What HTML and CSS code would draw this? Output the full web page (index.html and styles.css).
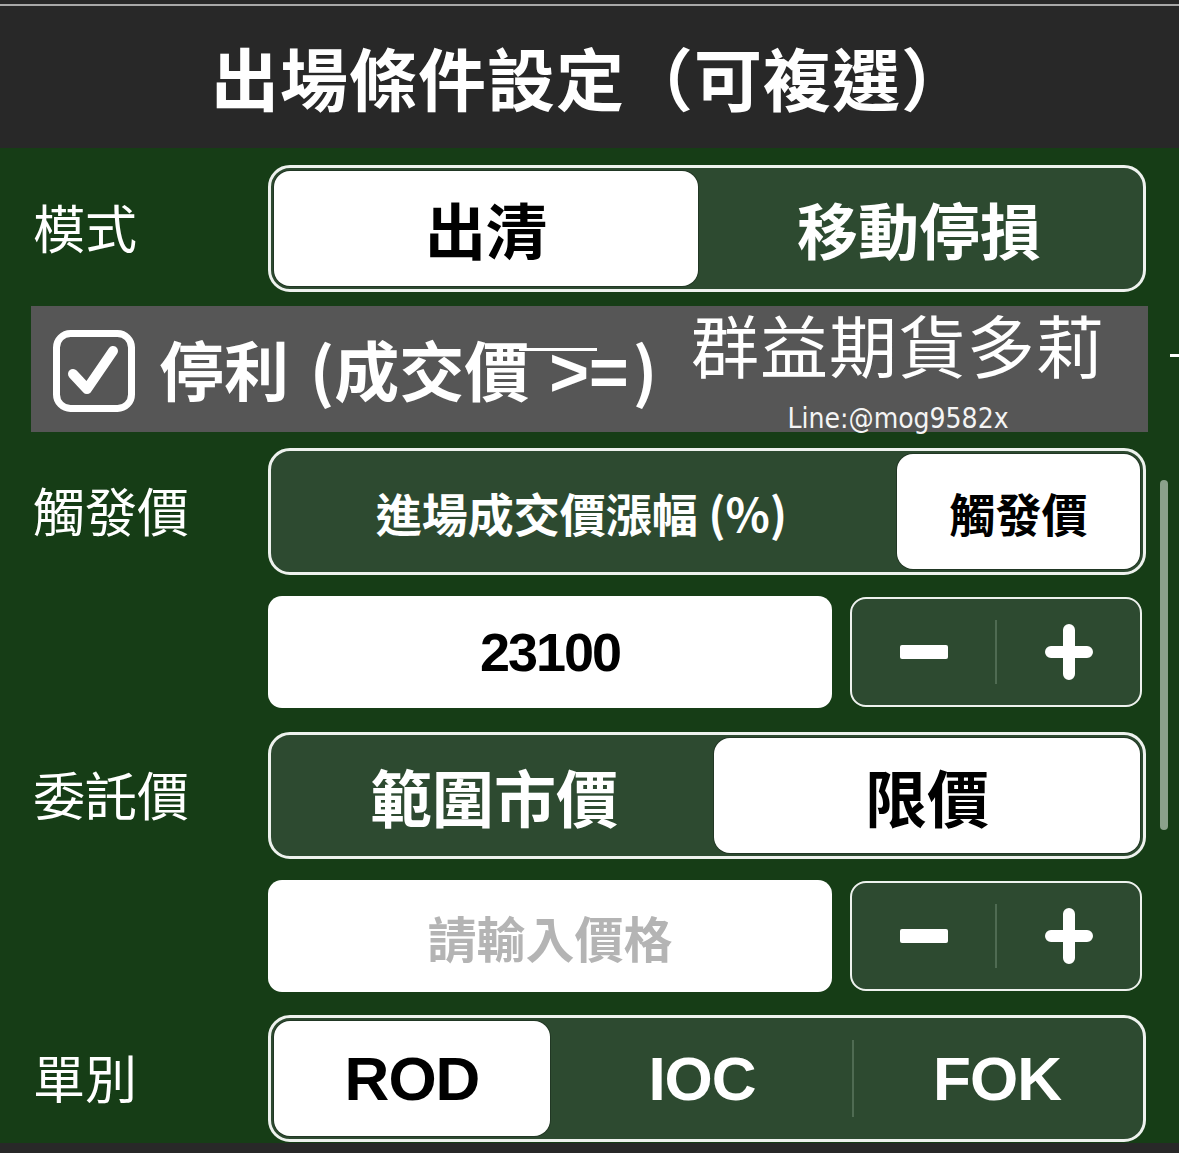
FILE: index.html
```html
<!DOCTYPE html>
<html lang="zh-Hant">
<head>
<meta charset="utf-8">
<title>出場條件設定</title>
<link rel="stylesheet" href="styles.css">
</head>
<body>
<div class="screen">
  <header class="topbar">
    <div class="topline"></div>
    <h1 class="title">出場條件設定（可複選）</h1>
  </header>

  <main class="panel">
    <div class="row">
      <div class="label">模式</div>
      <div class="seg">
        <div class="opt sel w-424">出清</div>
        <div class="opt grow">移動停損</div>
      </div>
    </div>

    <div class="banner">
      <svg class="checkbox" viewBox="0 0 82 82" width="82" height="82">
        <rect x="3.5" y="3.5" width="75" height="75" rx="14" ry="14" fill="none" stroke="#fff" stroke-width="7"/>
        <path d="M20 44 L34 59 L60 21" fill="none" stroke="#fff" stroke-width="10" stroke-linecap="round" stroke-linejoin="round"/>
      </svg>
      <span class="banner-text">停利 <span class="paren">(</span>成交價<span class="gte">&gt;=</span>)</span>
      <span class="strike"></span>
      <div class="watermark">
        <div class="wm-name">群益期貨多莉</div>
        <div class="wm-line">Line:@mog9582x</div>
      </div>
    </div>
    <span class="edge-dash"></span>

    <div class="row r-trigger">
      <div class="label">觸發價</div>
      <div class="seg">
        <div class="opt w-624 small">進場成交價漲幅 (%)</div>
        <div class="opt sel grow mid">觸發價</div>
      </div>
    </div>

    <div class="row r-input">
      <div class="label"></div>
      <div class="inputs">
        <div class="field value">23100</div>
        <div class="stepper">
          <div class="step">
            <svg viewBox="0 0 48 14" width="48" height="14"><rect x="0" y="0" width="48" height="14" rx="2" fill="#fff"/></svg>
          </div>
          <div class="step-div"></div>
          <div class="step">
            <svg viewBox="0 0 48 56" width="48" height="56"><path d="M24 6 V50 M6 28 H42" stroke="#fff" stroke-width="12" stroke-linecap="round" fill="none"/></svg>
          </div>
        </div>
      </div>
    </div>

    <div class="row r-order">
      <div class="label">委託價</div>
      <div class="seg">
        <div class="opt w-441 big">範圍市價</div>
        <div class="opt sel grow big">限價</div>
      </div>
    </div>

    <div class="row r-input2">
      <div class="label"></div>
      <div class="inputs">
        <div class="field placeholder">請輸入價格</div>
        <div class="stepper">
          <div class="step">
            <svg viewBox="0 0 48 14" width="48" height="14"><rect x="0" y="0" width="48" height="14" rx="2" fill="#fff"/></svg>
          </div>
          <div class="step-div"></div>
          <div class="step">
            <svg viewBox="0 0 48 56" width="48" height="56"><path d="M24 6 V50 M6 28 H42" stroke="#fff" stroke-width="12" stroke-linecap="round" fill="none"/></svg>
          </div>
        </div>
      </div>
    </div>

    <div class="row r-type">
      <div class="label">單別</div>
      <div class="seg">
        <div class="opt sel latin w-276">ROD</div>
        <div class="opt latin w-304">IOC</div>
        <div class="opt latin grow divided">FOK</div>
      </div>
    </div>

    <div class="scrollbar"></div>
  </main>

  <footer class="bottombar"></footer>
</div>
</body>
</html>
```

FILE: styles.css
```css
html, body {
  margin: 0;
  padding: 0;
  background: #282828;
}

.screen {
  width: 1179px;
  height: 1153px;
  overflow: hidden;
  display: flex;
  flex-direction: column;
  font-family: "Noto Sans CJK TC", "Noto Sans", sans-serif;
  color: #fff;
  position: relative;
}

.topbar {
  height: 148px;
  flex: 0 0 148px;
  background: #282828;
  position: relative;
  display: flex;
  align-items: center;
}

.topline {
  position: absolute;
  left: 0;
  right: 0;
  top: 4px;
  height: 2px;
  background: #a8a8a8;
}

.title {
  margin: 0;
  padding-left: 211px;
  padding-top: 6px;
  font-size: 68px;
  font-weight: 700;
  letter-spacing: 1px;
  white-space: nowrap;
  color: #fff;
  line-height: 1;
}

.panel {
  flex: 0 0 995px;
  height: 995px;
  background: #163d16;
  box-sizing: border-box;
  padding: 17px 0 0 33px;
  display: flex;
  flex-direction: column;
  position: relative;
}

.row {
  display: grid;
  grid-template-columns: 235px 878px;
  align-items: center;
}

.label {
  font-size: 52px;
  font-weight: 400;
  color: #fff;
  line-height: 1;
  padding-bottom: 4px;
}

.seg {
  height: 127px;
  box-sizing: border-box;
  border: 3px solid #eef2ee;
  border-radius: 22px;
  padding: 3px;
  background: #2d4a30;
  display: flex;
}

.opt {
  box-sizing: border-box;
  display: flex;
  align-items: center;
  justify-content: center;
  color: #fff;
  font-weight: 700;
  font-size: 61px;
  border-radius: 16px;
  position: relative;
  white-space: nowrap;
  line-height: 1;
}

.opt.sel {
  background: #fff;
  color: #000;
  box-shadow: 0 0 0 1px rgba(0, 0, 0, 0.25);
}

.opt.small { font-size: 46px; padding-right: 8px; }
.opt.mid { font-size: 46px; }
.opt.big { font-size: 62px; }

.opt.latin {
  font-family: "Liberation Sans", Arial, sans-serif;
  font-size: 62px;
  letter-spacing: -1px;
}

.w-424 { flex: 0 0 424px; }
.w-624 { flex: 0 0 623px; }
.w-441 { flex: 0 0 440px; }
.w-276 { flex: 0 0 276px; }
.w-304 { flex: 0 0 304px; }
.grow { flex: 1 1 auto; }

.opt.divided::before {
  content: "";
  position: absolute;
  left: -2px;
  top: 19px;
  bottom: 19px;
  width: 2px;
  background: #4f6b52;
}

.banner {
  margin: 14px 0 0 -2px;
  width: 1117px;
  height: 126px;
  background: #565656;
  display: flex;
  align-items: center;
  position: relative;
  box-sizing: border-box;
  padding-left: 22px;
}

.checkbox {
  flex: 0 0 82px;
  margin-top: 4px;
}

.banner-text {
  margin-left: 24px;
  font-size: 65px;
  font-weight: 700;
  color: #fff;
  white-space: nowrap;
  line-height: 1;
  margin-top: 4px;
}

.paren { margin-left: 6px; }

.gte {
  font-family: "Liberation Sans", Arial, sans-serif;
  font-weight: 700;
  font-size: 68px;
  margin-left: 20px;
  margin-right: 4px;
}

.strike {
  position: absolute;
  left: 488px;
  top: 42px;
  width: 78px;
  height: 3px;
  background: #fff;
}

.watermark {
  position: absolute;
  left: 660px;
  top: 4px;
  display: flex;
  flex-direction: column;
  align-items: center;
}

.wm-name {
  font-size: 68px;
  font-weight: 400;
  line-height: 1;
  color: #fff;
  letter-spacing: 1px;
}

.wm-line {
  font-family: "DejaVu Sans Condensed", "DejaVu Sans", sans-serif;
  font-size: 28px;
  line-height: 1;
  margin-top: 27px;
  margin-left: 0;
  color: #f4f4f4;
}

.edge-dash {
  position: absolute;
  left: 1170px;
  top: 206px;
  width: 9px;
  height: 3px;
  background: #fff;
}

.r-trigger { margin-top: 16px; }
.r-input { margin-top: 21px; }
.r-order { margin-top: 24px; }
.r-input2 { margin-top: 21px; }
.r-type { margin-top: 23px; }

.inputs {
  display: flex;
  gap: 18px;
  height: 112px;
}

.field {
  flex: 0 0 564px;
  background: #fff;
  border-radius: 14px;
  display: flex;
  align-items: center;
  justify-content: center;
}

.field.value {
  font-family: "Liberation Sans", Arial, sans-serif;
  font-weight: 700;
  font-size: 54px;
  letter-spacing: -2px;
  color: #000;
}

.field.placeholder {
  font-size: 49px;
  font-weight: 700;
  color: #b4b4b4;
}

.stepper {
  flex: 0 0 292px;
  box-sizing: border-box;
  border: 2px solid #eef2ee;
  border-radius: 16px;
  background: #2d4a30;
  display: flex;
  align-items: center;
  margin: 1px 0;
}

.step {
  flex: 1;
  display: flex;
  align-items: center;
  justify-content: center;
}

.step-div {
  width: 2px;
  height: 64px;
  background: #4f6b52;
}

.scrollbar {
  position: absolute;
  left: 1160px;
  top: 332px;
  width: 8px;
  height: 350px;
  border-radius: 4px;
  background: #8ba18b;
}

.bottombar {
  flex: 1 1 auto;
  background: #282828;
}
```
